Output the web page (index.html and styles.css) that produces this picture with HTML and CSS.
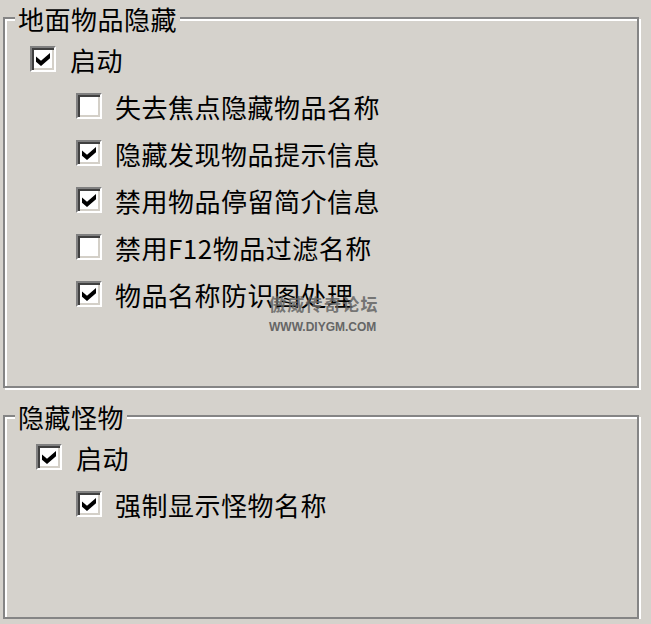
FILE: index.html
```html
<!DOCTYPE html>
<html lang="zh-CN">
<head>
<meta charset="utf-8">
<title>设置</title>
<link rel="stylesheet" href="styles.css">
</head>
<body>
<div class="panel">
  <fieldset class="group group-ground">
    <legend class="group-title">地面物品隐藏</legend>
    <div class="row row-main">
      <span class="box"><svg class="check" viewBox="0 0 7 7.5" preserveAspectRatio="none"><polygon points="0,2 2.5,4.5 7,0 7,3 2.5,7.5 0,5"/></svg></span>
      <span class="label label-main">启动</span>
    </div>
    <div class="row row-sub">
      <span class="box"></span>
      <span class="label">失去焦点隐藏物品名称</span>
    </div>
    <div class="row row-sub">
      <span class="box"><svg class="check" viewBox="0 0 7 7.5" preserveAspectRatio="none"><polygon points="0,2 2.5,4.5 7,0 7,3 2.5,7.5 0,5"/></svg></span>
      <span class="label">隐藏发现物品提示信息</span>
    </div>
    <div class="row row-sub">
      <span class="box"><svg class="check" viewBox="0 0 7 7.5" preserveAspectRatio="none"><polygon points="0,2 2.5,4.5 7,0 7,3 2.5,7.5 0,5"/></svg></span>
      <span class="label">禁用物品停留简介信息</span>
    </div>
    <div class="row row-sub">
      <span class="box"></span>
      <span class="label">禁用F12物品过滤名称</span>
    </div>
    <div class="row row-sub">
      <span class="box"><svg class="check" viewBox="0 0 7 7.5" preserveAspectRatio="none"><polygon points="0,2 2.5,4.5 7,0 7,3 2.5,7.5 0,5"/></svg></span>
      <span class="label">物品名称防识图处理</span>
    </div>
  </fieldset>

  <fieldset class="group group-monster">
    <legend class="group-title">隐藏怪物</legend>
    <div class="row row-main">
      <span class="box"><svg class="check" viewBox="0 0 7 7.5" preserveAspectRatio="none"><polygon points="0,2 2.5,4.5 7,0 7,3 2.5,7.5 0,5"/></svg></span>
      <span class="label label-main">启动</span>
    </div>
    <div class="row row-sub">
      <span class="box"><svg class="check" viewBox="0 0 7 7.5" preserveAspectRatio="none"><polygon points="0,2 2.5,4.5 7,0 7,3 2.5,7.5 0,5"/></svg></span>
      <span class="label">强制显示怪物名称</span>
    </div>
  </fieldset>

  <div class="watermark">
    <div class="wm-cn">傲威传奇论坛</div>
    <div class="wm-en">WWW.DIYGM.COM</div>
  </div>
</div>
</body>
</html>
```

FILE: styles.css
```css
html, body {
  margin: 0;
  padding: 0;
  background: #d5d2cc;
}

body {
  font-family: "Noto Sans CJK SC", "Noto Sans", sans-serif;
  color: #000;
}

.panel {
  position: relative;
  padding: 3px 12px 0 3px;
}

.group {
  box-sizing: border-box;
  width: 636px;
  min-width: 0;
  margin: 0;
  padding: 2px 0 69px 0;
  border: 2px solid #858585;
  box-shadow: inset 2px 2px 0 #fff, 2px 2px 0 #fff;
}

.group + .group {
  margin-top: 13px;
}

.group-monster {
  padding-bottom: 90px;
}

.group-title {
  margin-left: 10px;
  padding: 2px 3px 0;
  font-size: 26px;
  line-height: 28px;
  letter-spacing: 0.5px;
  background: #d5d2cc;
}

.row {
  display: flex;
  align-items: center;
  height: 47px;
}

.row-main {
  padding-left: 25px;
}

.group-monster .row-main {
  padding-left: 31px;
}

.row-sub {
  padding-left: 71px;
}

.box {
  flex: none;
  display: block;
  width: 22px;
  height: 22px;
  border: 2px solid;
  border-color: #808080 #ffffff #ffffff #808080;
  box-shadow: inset 2px 2px 0 #404040, inset -2px -2px 0 #d4d0c8;
  background: #fff;
}

.check {
  display: block;
  width: 14px;
  height: 13px;
  margin: 5px 0 0 4px;
  fill: #000;
}

.label {
  margin-left: 13px;
  padding-top: 3px;
  font-size: 26px;
  line-height: 30px;
  letter-spacing: 0.5px;
  white-space: nowrap;
}

.label-main {
  margin-left: 14px;
}

.watermark {
  position: absolute;
  left: 269px;
  top: 294px;
  pointer-events: none;
}

.wm-cn {
  font-family: "Noto Sans CJK SC", sans-serif;
  font-weight: 700;
  font-size: 17px;
  line-height: 20px;
  letter-spacing: 1.3px;
  color: rgba(100, 100, 100, 0.85);
}

.wm-en {
  margin-top: 6px;
  font-family: "Liberation Sans", Arial, sans-serif;
  font-weight: 700;
  font-size: 12px;
  line-height: 14px;
  color: #666;
}
```
